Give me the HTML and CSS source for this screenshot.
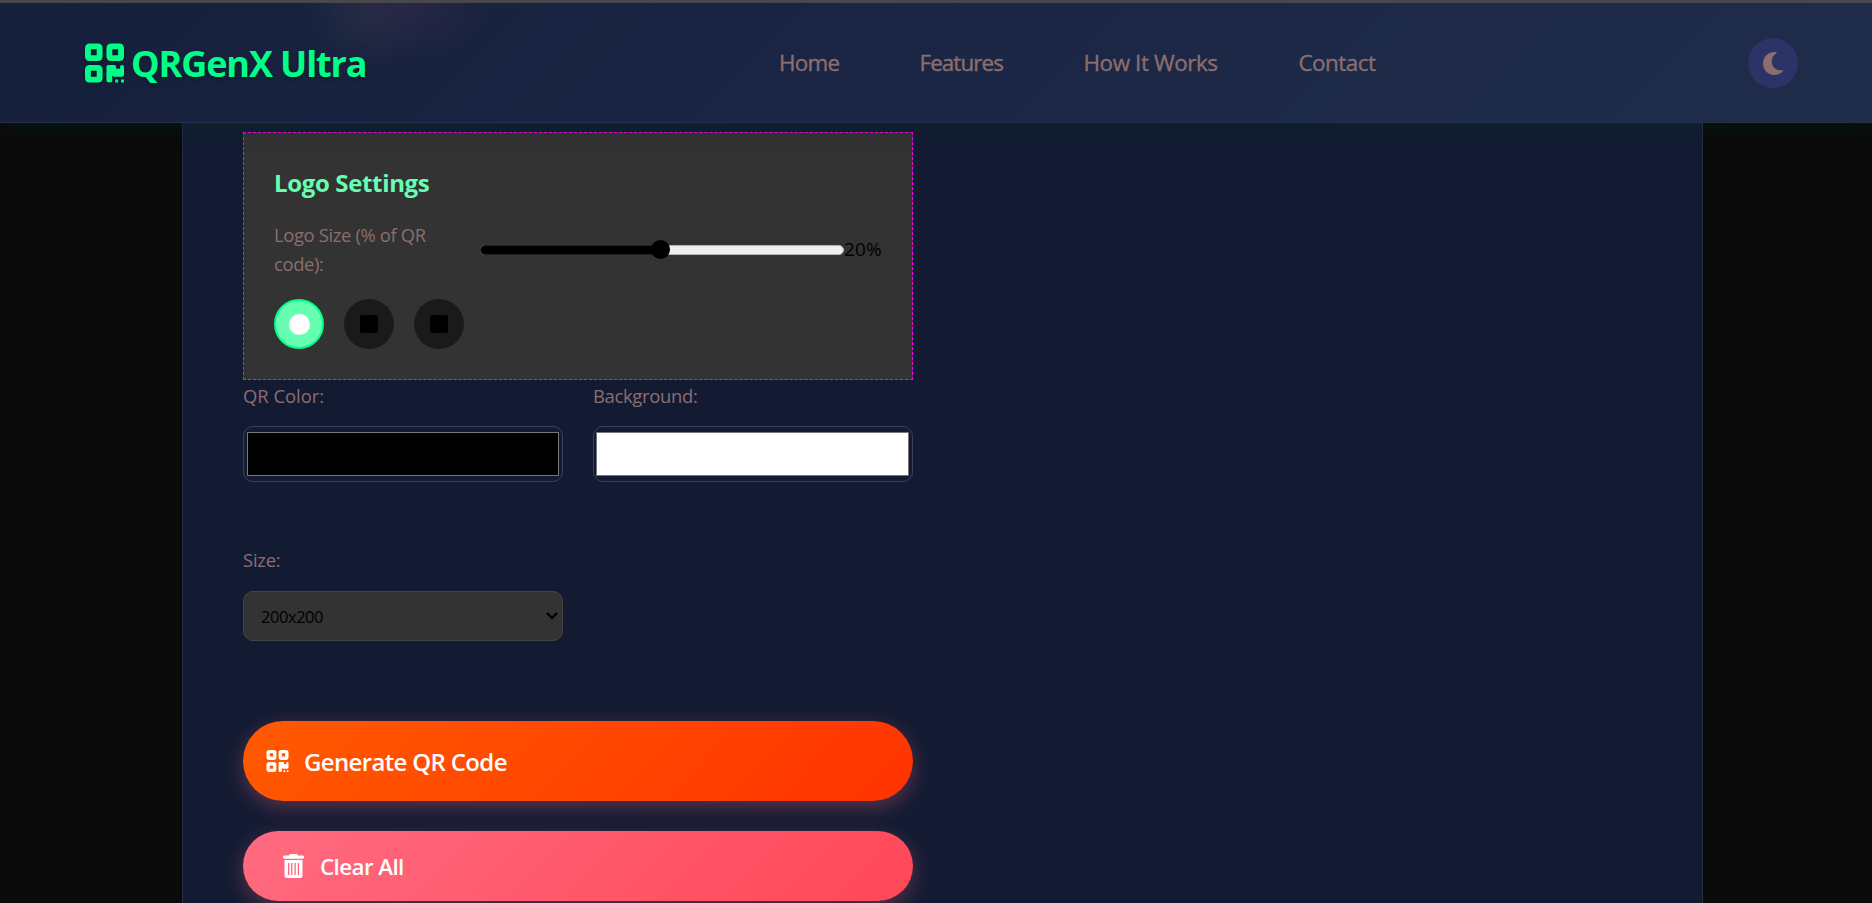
FILE: index.html
```html
<!DOCTYPE html>
<html lang="en">
<head>
<meta charset="utf-8">
<title>QRGenX Ultra</title>
<link rel="stylesheet" href="styles.css">
</head>
<body>
<svg width="0" height="0" class="defs">
  <symbol id="qr" viewBox="0 0 40 40">
    <path fill-rule="evenodd" d="M5 0h8q5 0 5 5v8q0 5-5 5h-8q-5 0-5-5v-8q0-5 5-5zM6 6v6h6v-6zM27 0h8q5 0 5 5v8q0 5-5 5h-8q-5 0-5-5v-8q0-5 5-5zM28 6v6h6v-6zM5 22h8q5 0 5 5v8q0 5-5 5h-8q-5 0-5-5v-8q0-5 5-5zM6 28v6h6v-6z"/>
    <path d="M24 22h6q2 0 2 2v2h4v-2q0-2 2-2t2 2v8q0 2-2 2h-8q-2 0-2-2v6q0 2-3 2t-3-2v-14q0-2 2-2zM31 37h3v3h-3zM37 37h3v3h-3z"/>
  </symbol>
</svg>
<header class="header">
  <div class="brand"><svg class="brand-icon"><use href="#qr"/></svg><span class="brand-name">QRGenX Ultra</span></div>
  <nav class="nav"><a class="n1">Home</a><a class="n2">Features</a><a class="n3">How It Works</a><a class="n4">Contact</a></nav>
  <button class="theme"><svg width="20" height="23" viewBox="0 0 20 23"><path d="M11.500 0C5 0 0 5.100 0 11.500S5 23 11.500 23c3.200 0 6-1.300 8.200-3.400.6-.6.200-1.500-.6-1.400C13 19 8.700 14.700 8.700 9.500c0-3.500 1.800-6.300 4.500-7.900.7-.4.500-1.300-.2-1.500z"/></svg></button>
</header>
<main class="panel">
  <div class="form">
    <section class="logo-box">
      <h3 class="logo-title"><span>Logo Settings</span></h3>
      <div class="size-row">
        <label class="size-label">Logo Size (% of QR<br>code):</label>
        <div class="slider"><div class="slider-fill"></div><div class="thumb"></div></div>
        <span class="percent">20%</span>
      </div>
      <div class="shapes"><i class="shape active"></i><i class="shape"></i><i class="shape"></i></div>
    </section>
    <div class="grid">
      <div class="field"><label class="lb-qr">QR Color:</label><div class="color"><div class="swatch black"></div></div></div>
      <div class="field"><label class="lb-bg">Background:</label><div class="color"><div class="swatch white"></div></div></div>
      <div class="field"><label class="lb-size">Size:</label><div class="select"><span>200x200</span><svg width="12" height="8" viewBox="0 0 12 8"><path d="M1 1l5 5 5-5" fill="none" stroke="#000" stroke-width="2.200"/></svg></div></div>
    </div>
    <button class="btn generate"><svg class="btn-qr"><use href="#qr"/></svg><span>Generate QR Code</span></button>
    <button class="btn clear"><svg class="trash" viewBox="0 0 21 24"><path d="M7 0h7l1 1.500h4.500a1.500 1.500 0 0 1 0 3.200h-18a1.500 1.500 0 0 1 0-3.200H6z"/><path fill-rule="evenodd" d="M1.500 6h18v15.500q0 2.500-2.500 2.500H4q-2.500 0-2.500-2.500zM5 9v12h1.300V9zM8.100 9v12h1.300V9zM11.500 9v12h1.300V9zM14.800 9v12h1.300V9z"/></svg><span>Clear All</span></button>
  </div>
</main>
</body>
</html>
```
FILE: styles.css
```css
* { box-sizing: border-box; }
html { height: 100%; overflow: hidden; }
body { margin: 0; height: 100%; overflow: hidden; background: #0a0a0a; font-family: "Open Sans", "Noto Sans", sans-serif; display: flex; flex-direction: column; align-items: center; }
.defs { position: absolute; }
button { border: 0; padding: 0; font-family: inherit; }
span, a, label { white-space: nowrap; }
.header { position: relative; z-index: 2; width: 100%; height: 123px; flex: none; display: flex; align-items: center; padding: 1px 74px 0 85px; border-top: 3px solid #48474c; border-bottom: 1px solid #24304f; background: radial-gradient(ellipse 85px 56px at 405px 0, rgba(45,40,72,.8) 0%, rgba(45,40,72,0) 100%), radial-gradient(ellipse 60px 55px at 365px 10px, rgba(36,46,66,.8), rgba(36,46,66,0)), linear-gradient(135deg, #16203c, #1b2645 50%, #1f2d4a); box-shadow: 0 4px 20px rgba(0,50,25,.35); }
.brand { display: flex; align-items: center; width: 694px; color: #00ff88; }
.brand-icon { width: 39px; height: 40px; fill: #00ff88; filter: drop-shadow(0 2px 3px rgba(0,0,0,.3)); }
.brand-name { margin-left: 7px; padding-top: 1px; font-size: 36px; font-weight: 700; line-height: 48px; letter-spacing: -1.100px; text-shadow: 0 2px 4px rgba(0,0,0,.3); }
.nav { display: flex; flex: 1; color: #8d6e6e; font-size: 22.400px; font-weight: 500; line-height: 30px; -webkit-text-stroke: .35px #8d6e6e; }
.n1 { width: 140.500px; letter-spacing: -.7px; }
.n2 { width: 164px; letter-spacing: -.9px; }
.n3 { width: 215px; letter-spacing: -.4px; }
.n4 { letter-spacing: -.5px; }
.theme { width: 50px; height: 50px; border-radius: 50%; background: #2c3366; display: flex; align-items: center; justify-content: center; }
.theme path { fill: #8d6e6e; }
.panel { width: 1521px; margin-right: -13px; flex: 1; min-height: 0; padding: 9px 60px 0; background: #131b33; border: 1px solid #242d45; border-width: 0 1px; }
.form { width: 670px; display: flex; flex-direction: column; }
.logo-box { height: 248px; border: 1px dashed #f0f; background: #333; padding: 28px 30px; }
.logo-title { margin: 0; height: 42px; font-size: 24px; line-height: 43px; letter-spacing: -.35px; color: #66ffb2; }
.size-row { display: flex; align-items: center; height: 58px; margin: 17px 0 21px; }
.size-label { width: 206px; font-size: 18.400px; line-height: 29px; letter-spacing: -.35px; color: #8d6e6e; }
.slider { position: relative; top: 1px; width: 364px; height: 10px; border-radius: 5px; background: #efefef; border: 1px solid #b2b2b2; }
.slider-fill { width: 180px; height: 10px; margin: -1px 0 0 -1px; background: #000; border: 1px solid #222; border-radius: 5px 0 0 5px; }
.thumb { position: absolute; left: 170px; top: -6px; width: 19px; height: 19px; border-radius: 50%; background: #000; }
.percent { font-size: 19px; letter-spacing: .2px; color: #000; }
.shapes { display: flex; gap: 20px; }
.shape { width: 50px; height: 50px; border-radius: 50%; background: #1a1a1a; display: flex; align-items: center; justify-content: center; }
.shape::before { content: ""; width: 18px; height: 18px; border-radius: 2px; background: #000; }
.active { background: #66ffb2; border: 2px solid #00ff88; }
.active::before { width: 21px; height: 21px; border-radius: 50%; background: #fff; }
.grid { display: grid; grid-template-columns: 320px 320px; column-gap: 30px; grid-template-rows: 164px 177px; }
.field label { display: block; font-size: 18.400px; line-height: 32px; height: 46px; color: #8d6e6e; }
.field .lb-bg { letter-spacing: -.3px; }
.field .lb-size { letter-spacing: -.2px; }
.color { height: 56px; border: 1px solid #3a405a; border-radius: 10px; padding: 5px 3px; }
.swatch { height: 44px; border: 1px solid #777; }
.black { background: #000; }
.white { background: #fff; margin-left: -1px; }
.select { height: 50px; margin-top: 1px; display: flex; align-items: center; justify-content: space-between; background: #333; border: 1px solid #444; border-radius: 10px; padding: 0 4px 0 17px; font-size: 16.500px; letter-spacing: -.45px; color: #000; }
.btn { display: flex; align-items: center; color: #fff; font-weight: 600; box-shadow: 0 6px 20px rgba(255,107,129,.3); }
.btn svg { fill: #fff; }
.generate { height: 80px; border-radius: 40px; padding-left: 23px; font-size: 24px; letter-spacing: -.65px; background: linear-gradient(135deg, #ff5a00, #ff3300); margin-bottom: 30px; }
.btn-qr { width: 23px; height: 22px; margin-right: 15px; }
.clear { height: 70px; border-radius: 35px; padding-left: 40px; font-size: 22.400px; letter-spacing: -.6px; background: linear-gradient(135deg, #ff6b81, #ff4757); }
.trash { width: 21px; height: 24px; margin-right: 16px; }
```
